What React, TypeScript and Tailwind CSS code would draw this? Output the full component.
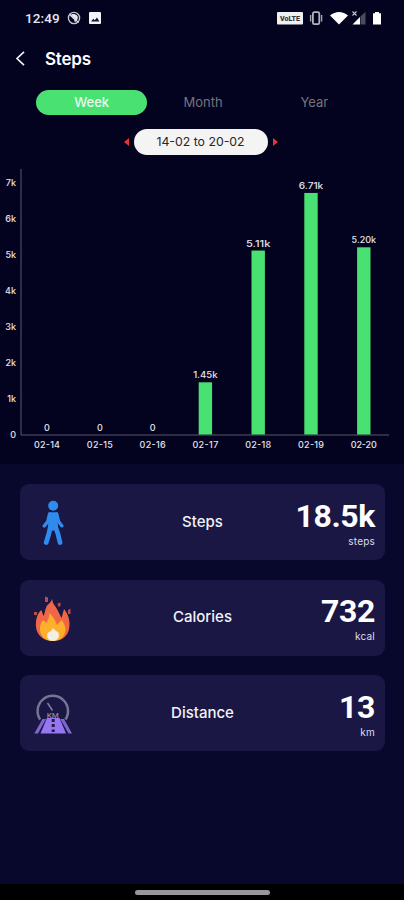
import React from 'react'

interface Day {
    label: string;
    value: number;
    text: string;
}

interface StatProps {
    icon: React.ReactNode;
    title: string;
    value: string;
    unit: string;
}

const days: Day[] = [
    { label: '02-14', value: 0, text: '0' },
    { label: '02-15', value: 0, text: '0' },
    { label: '02-16', value: 0, text: '0' },
    { label: '02-17', value: 1.45, text: '1.45k' },
    { label: '02-18', value: 5.11, text: '5.11k' },
    { label: '02-19', value: 6.71, text: '6.71k' },
    { label: '02-20', value: 5.2, text: '5.20k' },
]

const StatusBar = () => (
    <div className="h-9 flex items-center justify-between pl-[25px] pr-[22px]">
        <div className="flex items-center">
            <span className="w-[35px] text-[13.5px] tracking-[0.1px] font-medium font-['Roboto',sans-serif] text-[#e6e6ee]">12:49</span>
            <svg className="ml-[7px]" width="14" height="14" viewBox="0 0 14 14">
                <circle cx="7" cy="7" r="5.6" fill="none" stroke="#c6c6d0" strokeWidth="1.4" />
                <path d="M3 4.8C5 2.5 8 2.5 10.5 5C11.5 7.5 10 10.5 7.5 11C8 8.5 6 8 3 4.8Z" fill="#e6e6ee" />
                <path d="M2.5 3L11.5 11.5" stroke="#d6d6de" strokeWidth="1.2" />
            </svg>
            <svg className="ml-2" width="12" height="12" viewBox="0 0 12 12">
                <rect width="12" height="12" rx="1" fill="#f4f4f8" />
                <path d="M2 9.5L4.3 6.8L5.8 8.3L8 5.6L10.4 9.5Z" fill="#14132e" />
            </svg>
        </div>
        <svg width="106" height="16" viewBox="0 0 106 16">
            <rect x="1" y="2" width="26" height="12.5" rx="1" fill="#f0f0f3" />
            <text x="14" y="11" textAnchor="middle" fontFamily="Roboto, sans-serif" fontSize="7" fontWeight="900" textLength="20" lengthAdjust="spacingAndGlyphs" fill="#35353f">VoLTE</text>
            <rect x="36.9" y="2.2" width="6.4" height="12" rx="1.5" fill="none" stroke="#b4b4bd" strokeWidth="1.8" />
            <path d="M34.6 5V11.5M45.6 5V11.5" stroke="#a4a4ae" strokeWidth="1.4" />
            <path d="M54 5.6C59 .9 67 .9 72 5.6L63 14.4Z" fill="#fff" />
            <path d="M76.5 14.5L84 7V14.5Z" fill="#fff" />
            <path d="M84.5 6.5L89.5 1.8V14.5H84.5Z" fill="#4b4b5d" />
            <path d="M76.5 1.5L80.5 5.5M80.5 1.5L76.5 5.5" stroke="#c7c7d0" strokeWidth="1.1" />
            <path d="M97 3.2H99V2H103V3.2H105V14.5H97Z" fill="#fff" />
        </svg>
    </div>
)

const Chart = () => (
    <svg className="block" width="404" height="309" viewBox="0 155 404 309" fontFamily="Inter, sans-serif" fontSize="9" fontWeight="500" fill="#e4e4ec">
        <path d="M21 169V435H389" fill="none" stroke="#5a5968" strokeWidth="1" />
        {[0, 1, 2, 3, 4, 5, 6, 7].map((k) => (
            <text key={k} x="16" y={438.3 - k * 36} textAnchor="end">{k === 0 ? '0' : `${k}k`}</text>
        ))}
        {days.map((day, i) => {
            const x = 47 + i * 52.8
            const top = 434.5 - day.value * 36
            return (
                <g key={day.label} textAnchor="middle">
                    <rect x={x - 6.7} y={top} width="13.4" height={day.value * 36} fill="#4ae173" />
                    <text x={x} y={day.value ? top - 4 : 431} textLength={day.value ? 24.5 : undefined} lengthAdjust="spacingAndGlyphs">{day.text}</text>
                    <text x={x} y="448.3" textLength="26">{day.label}</text>
                </g>
            )
        })}
    </svg>
)

const WalkIcon = () => (
    <svg width="22" height="46" viewBox="0 0 22 46" fill="none" stroke="#2f8bed" strokeLinecap="round" strokeLinejoin="round">
        <circle cx="11.2" cy="5.8" r="5" fill="#2f8bed" stroke="none" />
        <path d="M7 12.2H15.2L16 27L11 31L6 27Z" fill="#2f8bed" stroke="none" />
        <path d="M7.6 14L5.8 21.5L2.2 26M14.7 14L16.5 21.5L19.8 25.8" strokeWidth="3.4" />
        <path d="M8.6 26L6.8 34L4.2 42.5M13.2 26L16 34L18 42.5" strokeWidth="4.8" />
    </svg>
)

const FireIcon = () => (
    <svg width="40" height="46" viewBox="0 0 40 46">
        <path d="M19 3C20 9 23 10 25.5 16L28.5 22L31 13C37 20 37.5 29 35.5 35C33 42 27 45 20 45C10 45 4 39 3 31C2.5 24 4 18 8.3 14L10.5 20C12.5 16 12 12 14.5 9C16.5 7 18 6 19 3Z" fill="#ef6747" />
        <path d="M16.5 17C19 20 22 23 24 29L28.5 24C32 28 34 34 31 39C28.5 43.5 24 45 19.5 45C12 45 7 40 7 33C7 29 8 27 10 24L13.5 27C14.5 24 16.8 21 16.5 17Z" fill="#fdb12a" />
        <path d="M20 32L23 35L25.5 36.5C27 41 24.5 45 20 45C14.5 45 13 40 15 36.5L18 35Z" fill="#f5eee2" />
        <path d="M12 .5L15 1.5V6H12ZM24.5 7.5L27.5 6.5V10L25.5 11ZM35 14L37.5 12.5V18H35ZM1 16H4V19H1Z" fill="#b94f4d" />
    </svg>
)

const DistanceIcon = () => (
    <svg width="38" height="42" viewBox="0 0 38 42">
        <path d="M6.2 26.5A15.2 15.2 0 1 1 31.4 26.5" fill="none" stroke="#777493" strokeWidth="2.5" />
        <path d="M13.5 10L18.5 17.5" stroke="#827ca8" strokeWidth="1.5" />
        <text x="18.8" y="24.5" textAnchor="middle" fontSize="8" fontWeight="500" fontFamily="Roboto, sans-serif" fill="#898598">KM</text>
        <path d="M8.5 26H12L4 40.5H.3ZM26.3 26H30L38 40.5H34.5Z" fill="#8065cf" />
        <path d="M13 25H25.5L32 40.5H6.5Z" fill="#9776f2" />
        <path d="M19.2 26V29M19.2 31V34M19.2 36.5V39" stroke="#211b4b" strokeWidth="3" />
    </svg>
)

const StatCard: React.FC<StatProps> = ({ icon, title, value, unit }) => (
    <div className="h-[76px] grid grid-cols-3 items-center rounded-[9px] bg-[#1a1744] px-[10px] text-white">
        <div className="w-[45px] flex justify-center pt-[2px]">{icon}</div>
        <span className="text-center text-[15px] font-medium text-[#f2f2f8]">{title}</span>
        <div className="flex flex-col items-end">
            <span className="mt-[2px] mb-[2px] text-[32px] leading-[34px] tracking-[-0.4px] font-bold font-['Roboto',sans-serif]">{value}</span>
            <span className="text-[10px] leading-[13px] tracking-[0.2px] text-[#dddde8]">{unit}</span>
        </div>
    </div>
)

const App = () => {
    return (
        <div className="w-[404px] h-[900px] flex flex-col overflow-hidden bg-[#08082c] font-['Inter',sans-serif]">
            <div className="h-[464px] shrink-0 bg-[#03021f]">
                <StatusBar />
                <div className="h-[54px] flex items-start pt-[13px] pl-[15px]">
                    <svg className="mt-[2px]" width="11" height="15" viewBox="0 0 11 15" fill="none" stroke="#f0f0f5" strokeWidth="1.7">
                        <path d="M9 .8L2 7.5L9 14.2" />
                    </svg>
                    <h1 className="ml-[19px] text-[17px] leading-5 font-semibold tracking-[-0.2px] text-white">Steps</h1>
                </div>
                <div className="ml-[36px] w-[334px] h-[25px] grid grid-cols-3 text-[13px] text-[#75757f]">
                    <button className="h-[25px] rounded-full bg-[#4ae173] font-medium text-[#e8fbed]">Week</button>
                    <button className="h-[25px]">Month</button>
                    <button className="h-[25px]">Year</button>
                </div>
                <div className="mt-[14px] h-[26px] -ml-[3px] flex items-center justify-center gap-[5px]">
                    <svg width="5" height="8" viewBox="0 0 5 8"><path d="M5 0V8L0 4Z" fill="#e53535" /></svg>
                    <span className="w-[134px] h-[26px] rounded-full bg-[#f4f4f4] text-center text-[12.3px] leading-[25px] text-[#26262c]">14-02 to 20-02</span>
                    <svg width="5" height="8" viewBox="0 0 5 8"><path d="M0 0V8L5 4Z" fill="#e53535" /></svg>
                </div>
                <Chart />
            </div>
            <div className="grow flex flex-col gap-[19.5px] pt-5 pl-[20px] pr-[19px]">
                <StatCard icon={<WalkIcon />} title="Steps" value="18.5k" unit="steps" />
                <StatCard icon={<FireIcon />} title="Calories" value="732" unit="kcal" />
                <StatCard icon={<DistanceIcon />} title="Distance" value="13" unit="km" />
            </div>
            <div className="h-[16px] shrink-0 flex justify-center bg-black pt-[6px]">
                <div className="w-[135px] h-[5px] rounded-full bg-[#989898]" />
            </div>
        </div>
    )
}

export default App
